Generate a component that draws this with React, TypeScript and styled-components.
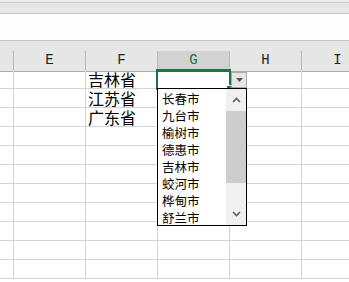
import styled, { createGlobalStyle } from "styled-components";

const GlobalStyle = createGlobalStyle`
    html, body {
        margin: 0;
        padding: 0;
        background: #ffffff;
    }
`;

const COLUMNS = ["E", "F", "G", "H", "I"];
const ACTIVE_COLUMN = "G";
const ROW_COUNT = 11;

const PROVINCES: Record<number, string> = {
    0: "吉林省",
    1: "江苏省",
    2: "广东省",
};

const CITIES = ["长春市", "九台市", "榆树市", "德惠市", "吉林市", "蛟河市", "桦甸市", "舒兰市"];

const Page = styled.div`
    width: 349px;
    height: 282px;
    overflow: hidden;
    background: #ffffff;
    font-family: "Noto Sans CJK SC", "Liberation Sans", sans-serif;
`;

const TopStrip = styled.div`
    height: 2px;
    background: #ebebeb;
    border-bottom: 1px solid #cfcfcf;
`;

const MenuBar = styled.div`
    height: 10px;
    background: #e6e6e6;
    border-bottom: 1px solid #c4c4c4;
`;

const FormulaBar = styled.div`
    height: 26px;
    background: #fdfdfd;
    border-bottom: 1px solid #c4c4c4;
`;

const HeaderGap = styled.div`
    height: 10px;
    background: #e6e6e6;
`;

const Sheet = styled.div`
    position: relative;
`;

const Row = styled.div<{ $header?: boolean }>`
    display: grid;
    grid-template-columns: 14px repeat(5, 72px);
    height: 19px;
    background: ${(p) => (p.$header ? "#e6e6e6" : "#ffffff")};
`;

const HeaderCell = styled.div<{ $active?: boolean }>`
    box-sizing: border-box;
    border-right: 1px solid #b8b8b8;
    border-bottom: ${(p) => (p.$active ? "2px solid #217346" : "1px solid #ababab")};
    background: ${(p) => (p.$active ? "#d2d2d2" : "#e6e6e6")};
    color: ${(p) => (p.$active ? "#217346" : "#222222")};
    font-family: "Liberation Mono", monospace;
    font-size: 14px;
    line-height: 19px;
    text-align: center;
`;

const Cell = styled.div`
    box-sizing: border-box;
    height: 19px;
    border-right: 1px solid #d4d4d4;
    border-bottom: 1px solid #d4d4d4;
    padding-left: 2px;
    font-size: 16px;
    line-height: 18px;
    color: #000000;
    white-space: nowrap;
`;

const ActiveCell = styled.div`
    position: absolute;
    left: 156px;
    top: 18px;
    width: 75px;
    height: 21px;
    box-sizing: border-box;
    border: 2px solid #217346;
`;

const FillHandle = styled.div`
    position: absolute;
    right: -4px;
    bottom: -4px;
    width: 5px;
    height: 5px;
    background: #217346;
    border: 1px solid #ffffff;
`;

const DropButton = styled.div`
    position: absolute;
    left: 231px;
    top: 21px;
    width: 16px;
    height: 16px;
    box-sizing: border-box;
    border: 1px solid #ababab;
    background: #e6e6e6;
    display: flex;
    align-items: center;
    justify-content: center;
`;

const ListBox = styled.div`
    position: absolute;
    left: 157px;
    top: 37px;
    width: 90px;
    height: 138px;
    box-sizing: border-box;
    border: 1px solid #000000;
    background: #ffffff;
    display: flex;
`;

const Items = styled.ul`
    flex: 1;
    margin: 0;
    padding: 1px 0 0 4px;
    list-style: none;
`;

const Item = styled.li`
    height: 17px;
    font-size: 12.5px;
    line-height: 17px;
    color: #000000;
    white-space: nowrap;
`;

const ScrollBar = styled.div`
    width: 20px;
    display: flex;
    flex-direction: column;
    background: #f0f0f0;
`;

const ScrollArrow = styled.div`
    height: 22px;
    display: flex;
    align-items: center;
    justify-content: center;
`;

const Thumb = styled.div`
    height: 72px;
    background: #cdcdcd;
`;

const Track = styled.div`
    flex: 1;
`;

function Chevron({ up }: { up?: boolean }) {
    return (
        <svg width="9" height="6" viewBox="0 0 9 6">
            <path
                d={up ? "M1 5 L4.5 1.5 L8 5" : "M1 1 L4.5 4.5 L8 1"}
                fill="none"
                stroke="#606060"
                strokeWidth="1.6"
            />
        </svg>
    );
}

export default function App() {
    return (
        <Page>
            <GlobalStyle />
            <TopStrip />
            <MenuBar />
            <FormulaBar />
            <HeaderGap />
            <Sheet>
                <Row $header>
                    <HeaderCell />
                    {COLUMNS.map((col) => (
                        <HeaderCell key={col} $active={col === ACTIVE_COLUMN}>
                            {col}
                        </HeaderCell>
                    ))}
                </Row>
                {Array.from({ length: ROW_COUNT }).map((_, r) => (
                    <Row key={r}>
                        <Cell />
                        {COLUMNS.map((col) => (
                            <Cell key={col}>{col === "F" ? PROVINCES[r] : null}</Cell>
                        ))}
                    </Row>
                ))}
                <ActiveCell>
                    <FillHandle />
                </ActiveCell>
                <DropButton>
                    <svg width="7" height="4" viewBox="0 0 7 4">
                        <path d="M0 0 H7 L3.5 4 Z" fill="#555555" />
                    </svg>
                </DropButton>
                <ListBox>
                    <Items>
                        {CITIES.map((city) => (
                            <Item key={city}>{city}</Item>
                        ))}
                    </Items>
                    <ScrollBar>
                        <ScrollArrow>
                            <Chevron up />
                        </ScrollArrow>
                        <Thumb />
                        <Track />
                        <ScrollArrow>
                            <Chevron />
                        </ScrollArrow>
                    </ScrollBar>
                </ListBox>
            </Sheet>
        </Page>
    );
}
